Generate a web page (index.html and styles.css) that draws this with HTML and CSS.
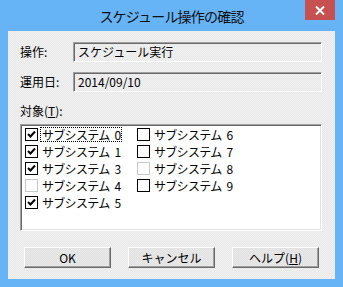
FILE: index.html
```html
<!DOCTYPE html>
<html lang="ja">
<head>
    <meta charset="UTF-8">
    <title>スケジュール操作の確認</title>
    <link rel="stylesheet" href="styles.css">
</head>
<body>
    <div class="window">
        <div class="titlebar">
            <div class="title">スケジュール操作の確認</div>
            <div class="close">
                <svg width="10" height="9" viewBox="0 0 10 9">
                    <path d="M1 0.5 L9 8.5 M9 0.5 L1 8.5" stroke="#fff" stroke-width="2" fill="none"/>
                </svg>
            </div>
        </div>

        <div class="client">
            <div class="fields">
                <span class="label">操作:</span>
                <div class="field">スケジュール実行</div>
                <span class="label">運用日:</span>
                <div class="field">2014/09/10</div>
            </div>

            <div class="list-label">対象(<u>T</u>):</div>
            <div class="listbox">
                <div class="item"><span class="box on"></span><span class="text focus">サブシステム 0</span></div>
                <div class="item"><span class="box on"></span><span class="text">サブシステム 1</span></div>
                <div class="item"><span class="box on"></span><span class="text">サブシステム 3</span></div>
                <div class="item"><span class="box gray"></span><span class="text">サブシステム 4</span></div>
                <div class="item"><span class="box on"></span><span class="text">サブシステム 5</span></div>
                <div class="item"><span class="box"></span><span class="text">サブシステム 6</span></div>
                <div class="item"><span class="box"></span><span class="text">サブシステム 7</span></div>
                <div class="item"><span class="box gray"></span><span class="text">サブシステム 8</span></div>
                <div class="item"><span class="box"></span><span class="text">サブシステム 9</span></div>
            </div>

            <div class="buttons">
                <button>OK</button>
                <button>キャンセル</button>
                <button>ヘルプ(<u>H</u>)</button>
            </div>
        </div>
    </div>
</body>
</html>
```

FILE: styles.css
```css
body {
    margin: 0;
    font-family: "Noto Sans CJK JP", "Liberation Sans", sans-serif;
    font-size: 12px;
    color: #000;
}

.window {
    width: 343px;
    height: 287px;
    box-sizing: border-box;
    background-color: #66b3f6;
    padding: 0 8px 8px 8px;
    display: flex;
    flex-direction: column;
}

.titlebar {
    height: 31px;
    display: flex;
    align-items: flex-start;
}

.title {
    flex: 1;
    margin-left: 30px;
    margin-top: 6px;
    text-align: center;
    font-size: 14px;
    letter-spacing: -0.8px;
    line-height: 20px;
    color: #111;
}

.close {
    width: 30px;
    height: 20px;
    background-color: #c75050;
    display: flex;
    align-items: center;
    justify-content: center;
}

.close svg {
    display: block;
}

.client {
    flex: 1;
    background: repeating-conic-gradient(#f0f0f0 0 25%, #e9e9e9 0 50%) 0 0 / 2px 2px;
    padding: 11px 13px 0 12px;
}

.fields {
    display: grid;
    grid-template-columns: 53px 1fr;
    row-gap: 10px;
    align-items: center;
}

.label {
    line-height: 14px;
}

.field {
    height: 20px;
    box-sizing: border-box;
    border: 1px solid;
    border-color: #a0a0a0 #fff #fff #a0a0a0;
    box-shadow: inset 1px 1px #696969;
    padding: 0 4px;
    line-height: 17px;
}

.list-label {
    margin-top: 12px;
    line-height: 14px;
}

.listbox {
    margin-top: 6px;
    height: 107px;
    box-sizing: border-box;
    background-color: #fff;
    border: 1px solid;
    border-color: #a0a0a0 #fff #fff #a0a0a0;
    box-shadow: inset 1px 1px #696969, inset -1px -1px #e3e3e3;
    padding: 1px 0 0 4px;
    display: grid;
    grid-template-columns: 112px 112px;
    grid-template-rows: repeat(5, 17px);
    grid-auto-flow: column;
}

.item {
    display: flex;
    align-items: center;
}

.box {
    width: 11px;
    height: 11px;
    border: 1px solid #000;
    background-color: #fff;
    flex: none;
}

.box.gray {
    border-color: #c8c8c8;
}

.box.on {
    background: #fff url("data:image/svg+xml,%3Csvg xmlns='http://www.w3.org/2000/svg' width='11' height='11'%3E%3Cpath d='M2 5 L4.5 7.5 L9 2.5' stroke='%23000' stroke-width='2' fill='none'/%3E%3C/svg%3E") no-repeat;
}

.text {
    margin-left: 2px;
    padding: 0 1px;
    line-height: 13px;
    border: 1px solid transparent;
    letter-spacing: -0.7px;
    word-spacing: 3px;
}

.text.focus {
    border: 1px dotted #000;
}

.buttons {
    margin-top: 16px;
    display: flex;
    gap: 17px;
    padding-left: 4px;
}

button {
    width: 87px;
    height: 21px;
    font-family: inherit;
    font-size: 12px;
    color: #000;
    background: repeating-conic-gradient(#e9e9e9 0 25%, #e1e1e1 0 50%) 0 0 / 2px 2px;
    border: 1px solid;
    border-color: #fff #696969 #696969 #fff;
    box-shadow: inset -1px -1px #a0a0a0, inset 1px 1px #e3e3e3;
    padding: 0;
    line-height: 17px;
}
```
